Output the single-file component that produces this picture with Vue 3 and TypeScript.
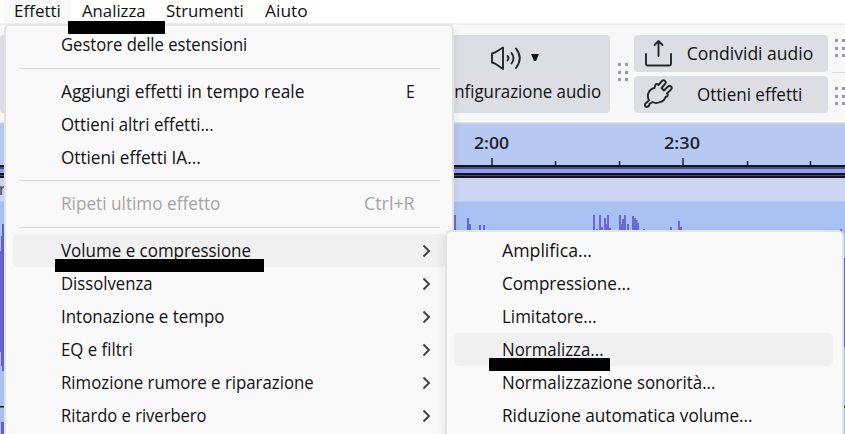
<script setup lang="ts">
import type { Directive } from 'vue'

interface Label { text: string; width: number }
interface MenuRow extends Label { kind: 'item'; shortcut?: Label; submenu?: boolean; disabled?: boolean; active?: boolean }
interface Divider { kind: 'divider' }

const bar: (Label & { open?: boolean })[] = [
  { text: 'Effetti', width: 47, open: true },
  { text: 'Analizza', width: 64 },
  { text: 'Strumenti', width: 78 },
  { text: 'Aiuto', width: 43 },
]

const effects: (MenuRow | Divider)[] = [
  { kind: 'item', text: 'Gestore delle estensioni', width: 186 },
  { kind: 'divider' },
  { kind: 'item', text: 'Aggiungi effetti in tempo reale', width: 243.5, shortcut: { text: 'E', width: 9 } },
  { kind: 'item', text: 'Ottieni altri effetti...', width: 153 },
  { kind: 'item', text: 'Ottieni effetti IA...', width: 140 },
  { kind: 'divider' },
  { kind: 'item', text: 'Ripeti ultimo effetto', width: 159, shortcut: { text: 'Ctrl+R', width: 51 }, disabled: true },
  { kind: 'divider' },
  { kind: 'item', text: 'Volume e compressione', width: 190, submenu: true, active: true },
  { kind: 'item', text: 'Dissolvenza', width: 91.5, submenu: true },
  { kind: 'item', text: 'Intonazione e tempo', width: 163.5, submenu: true },
  { kind: 'item', text: 'EQ e filtri', width: 72, submenu: true },
  { kind: 'item', text: 'Rimozione rumore e riparazione', width: 252.5, submenu: true },
  { kind: 'item', text: 'Ritardo e riverbero', width: 145.5, submenu: true },
]

const volume: (Label & { active?: boolean })[] = [
  { text: 'Amplifica...', width: 90 },
  { text: 'Compressione...', width: 128 },
  { text: 'Limitatore...', width: 95 },
  { text: 'Normalizza...', width: 102, active: true },
  { text: 'Normalizzazione sonorità...', width: 213 },
  { text: 'Riduzione automatica volume...', width: 251 },
]

// x, top and width of each visible peak of the waveform
const peaks: number[][] = [
  [454, 215, 2], [467, 218, 2], [469, 224, 2], [479, 225, 2], [483, 225, 2],
  [593, 215, 2], [596, 229, 2], [599, 215, 2], [601, 227, 2], [604, 218, 2], [606, 224, 2], [607, 215, 2], [609, 228, 2],
  [619, 215, 2], [621, 224, 2], [622, 219, 2], [624, 215, 2], [627, 224, 2],
  [632, 216, 2], [634, 218, 2], [636, 220, 1.5], [637, 223, 2], [643, 229, 2],
  [670, 227, 2], [678, 221, 2], [680, 227, 2], [840, 229, 2],
]
const ticks = [492, 555.5, 619.5, 683, 747.5, 810.5]

// Condenses a label to its nominal width
const vFit: Directive<HTMLElement, number> = {
  mounted(el, { value }) {
    const natural = el.offsetWidth
    el.style.transform = `scaleX(${value / natural})`
    el.style.marginRight = `${value - natural}px`
  },
}
</script>

<template>
  <div class="window">
    <nav class="menubar">
      <div v-for="m in bar" :key="m.text" class="tab" :class="{ open: m.open }">
        <span v-fit="m.width" class="label">{{ m.text }}</span>
      </div>
    </nav>

    <header class="toolbar">
      <div class="card audio">
        <div class="audio-icons">
          <svg width="32" height="26" viewBox="0 0 32 26" fill="none" stroke="#262629" stroke-width="1.9" stroke-linejoin="round" stroke-linecap="round">
            <path d="M2 8.500 5 7.500 13 2.500V24L5 18.500 2 17.500Z" />
            <path d="M17.500 11Q19.500 13 17.500 15.500M21.500 8Q25.500 13 21.500 18.500M26 3.500Q33.500 13 26 23" />
          </svg>
          <svg width="8" height="7" viewBox="0 0 8 7"><path d="M0 0H8L5 7H3Z" fill="#111" /></svg>
        </div>
        <span v-fit="157" class="label">onfigurazione audio</span>
      </div>
      <div class="grip"><i v-for="n in 6" :key="n" /></div>
      <div class="actions">
        <div class="card action">
          <svg width="30" height="30" viewBox="0 0 30 30" fill="none" stroke="#262629" stroke-width="1.9" stroke-linecap="round" stroke-linejoin="round">
            <path d="M3 15V25Q3 26.500 4.500 26.500H26.500Q28 26.500 28 25V15M15.500 17V3M11.500 6 15.500 2 19.500 6" />
          </svg>
          <div class="action-label"><span v-fit="126" class="label">Condividi audio</span></div>
        </div>
        <div class="card action">
          <svg width="30" height="30" viewBox="0 0 30 30" fill="none" stroke="#262629" stroke-width="1.9" stroke-linecap="round" stroke-linejoin="round">
            <path d="M12.500 5.500Q14 4.500 15.500 6L19 2Q20.500 .5 22 2T22 5L18.500 9 21 11.500 25 7.500Q26.500 6 28 7.500T28 10.500L24 14.500Q25.500 16 24 17.500L22.500 18Q21.500 22 17 23 13 25 9.500 23L6.500 25Q6 28 3.500 28 1 27 2.500 24.500L6 21.500Q4 17 5.500 14 7 10 11.500 9Z" />
          </svg>
          <div class="action-label"><span v-fit="105" class="label">Ottieni effetti</span></div>
        </div>
      </div>
      <div class="more">
        <div class="grip"><i v-for="n in 6" :key="n" /></div>
        <hr />
        <div class="grip"><i v-for="n in 6" :key="n" /></div>
      </div>
    </header>

    <main class="timeline">
      <svg width="845" height="311" viewBox="0 123 845 311">
        <rect y="123" width="845" height="43" fill="#b7c9f2" />
        <rect y="123" width="845" height="1" fill="#ccd2df" />
        <rect v-for="(x, i) in ticks" :key="x" :x="x - 0.750" :y="i % 3 === 0 ? 158 : 161" width="1.500" height="8" fill="#20232b" />
        <g class="time">
          <text x="474" y="149" textLength="35" lengthAdjust="spacingAndGlyphs">2:00</text>
          <text x="664" y="149" textLength="36" lengthAdjust="spacingAndGlyphs">2:30</text>
        </g>
        <rect y="165" width="845" height="13" fill="#12151f" />
        <rect y="167" width="845" height="2" fill="#4a5068" />
        <rect y="169" width="845" height="4" fill="#8e9ef5" />
        <rect y="175" width="845" height="1" fill="#4b5164" />
        <rect y="178" width="845" height="23" fill="#ced5f2" />
        <text class="track" x="-1" y="195">r</text>
        <rect y="201" width="845" height="1" fill="#b8caf3" />
        <rect y="202" width="845" height="232" fill="#a9c1f2" />
        <g fill="#6a69d6">
          <rect v-for="(p, i) in peaks" :key="i" :x="p[0]" :y="p[1]" :width="p[2]" :height="240 - p[1]" />
        </g>
        <path d="M2 224H5V371H2V366H1V352H0V251H1V236H2ZM1 422H5V434H1ZM843 258H845V347H843Z" fill="#6462cf" />
        <rect y="406" width="845" height="1.500" fill="#10131c" />
      </svg>
    </main>

    <section class="menu effects">
      <template v-for="(row, i) in effects" :key="i">
        <div v-if="row.kind === 'divider'" class="divider" />
        <div v-else class="row" :class="{ active: row.active, disabled: row.disabled }">
          <span v-fit="row.width" class="label">{{ row.text }}</span>
          <span v-if="row.shortcut" class="shortcut"><span v-fit="row.shortcut.width" class="label">{{ row.shortcut.text }}</span></span>
          <svg v-if="row.submenu" class="chevron" width="9" height="14" viewBox="0 0 9 14" fill="none" stroke="#414141" stroke-width="1.900"><path d="M1.500 1.500 7 7 1.500 12.500" /></svg>
        </div>
      </template>
    </section>

    <section class="menu volume">
      <div v-for="row in volume" :key="row.text" class="row" :class="{ active: row.active }">
        <span v-fit="row.width" class="label">{{ row.text }}</span>
      </div>
    </section>

    <div class="mark mark-analyze" />
    <div class="mark mark-volume" />
    <div class="mark mark-normalize" />
  </div>
</template>

<style>
body { margin: 0; overflow: hidden; }
</style>

<style scoped>
.window { position: relative; width: 845px; height: 434px; overflow: hidden; background: #f8f8f8; color: #111113; font: 17.5px/24px "Open Sans", "Noto Sans", sans-serif; }
.label { display: inline-block; white-space: pre; transform-origin: 0 50%; flex-shrink: 0; }
.menubar { display: flex; height: 23px; padding-left: 4px; background: #fff; border-bottom: 2px solid #efefef; box-sizing: content-box; }
.tab { box-sizing: border-box; height: 23px; padding: 0 10.500px; line-height: 22px; font-size: 17px; }
.tab.open { background: #f9f9f9; padding-left: 10px; }
.toolbar { box-sizing: border-box; display: flex; height: 98px; padding-top: 10px; border-bottom: 1px solid #dedfe2; }
.toolbar > * { flex-shrink: 0; }
.card { background: #dddee4; border-radius: 4px; }
.audio { box-sizing: border-box; width: 610px; height: 78px; display: flex; flex-direction: column; align-items: flex-end; padding: 9px 9px 0 0; }
.audio-icons { display: flex; align-items: center; gap: 9px; padding-right: 62px; height: 27px; margin-bottom: 8px; }
.grip { display: grid; grid-template-columns: 3px 3px; grid-auto-rows: 3px; gap: 4.500px; }
.grip i { background: #9697ad; }
.toolbar > .grip { margin: 28px 7px 0 7.500px; align-content: start; }
.actions { display: flex; flex-direction: column; gap: 3.500px; margin-left: -1.500px; }
.action { box-sizing: border-box; width: 194px; height: 37px; display: flex; align-items: center; padding-left: 9px; }
.action-label { flex: 1; display: flex; justify-content: center; padding-bottom: 1px; }
.more { padding-top: 4px; margin-left: 4px; }
.more .grip { padding-left: 3px; width: 20px; }
.more hr { width: 14px; margin: 15px 0 14px; border: 0; border-top: 1px solid #dedfe6; }
.timeline { height: 311px; }
.timeline svg { display: block; }
.time { font-size: 17px; font-weight: 600; fill: #202229; }
.track { font-size: 16px; fill: #333647; }
.menu { position: absolute; box-sizing: border-box; background: #f9f9f9; border: 2px solid #e3e3e4; border-bottom: 0; }
.effects { left: 4px; top: 24px; width: 450px; height: 410px; padding: 2.500px 6px 0 7px; border-radius: 6px 6px 0 0; box-shadow: 2px 3px 7px #0000000f; }
.volume { left: 445px; top: 230px; width: 399px; height: 204px; padding: 2px 9px 0 7px; border-radius: 6px 6px 0 0; box-shadow: -2px 3px 8px #00000014; }
.row { box-sizing: border-box; height: 33px; display: flex; align-items: center; padding: 0 0 2px 48px; border-radius: 5px; }
.row.active { background: #f0f0f0; }
.row.disabled { color: #a5a5a5; }
.shortcut { margin-left: auto; margin-right: 31px; }
.chevron { margin-left: auto; margin-right: 15.500px; margin-top: 2px; }
.divider { height: 13.500px; display: flex; align-items: center; margin-left: 5px; margin-right: 6px; }
.divider::before { content: ""; flex: 1; height: 1px; background: #dadada; }
.mark { position: absolute; height: 13px; background: #000; }
.mark-analyze { left: 68px; top: 21px; width: 97px; }
.mark-volume { left: 55px; top: 259px; width: 209px; }
.mark-normalize { left: 489px; top: 358px; width: 121px; }
</style>
